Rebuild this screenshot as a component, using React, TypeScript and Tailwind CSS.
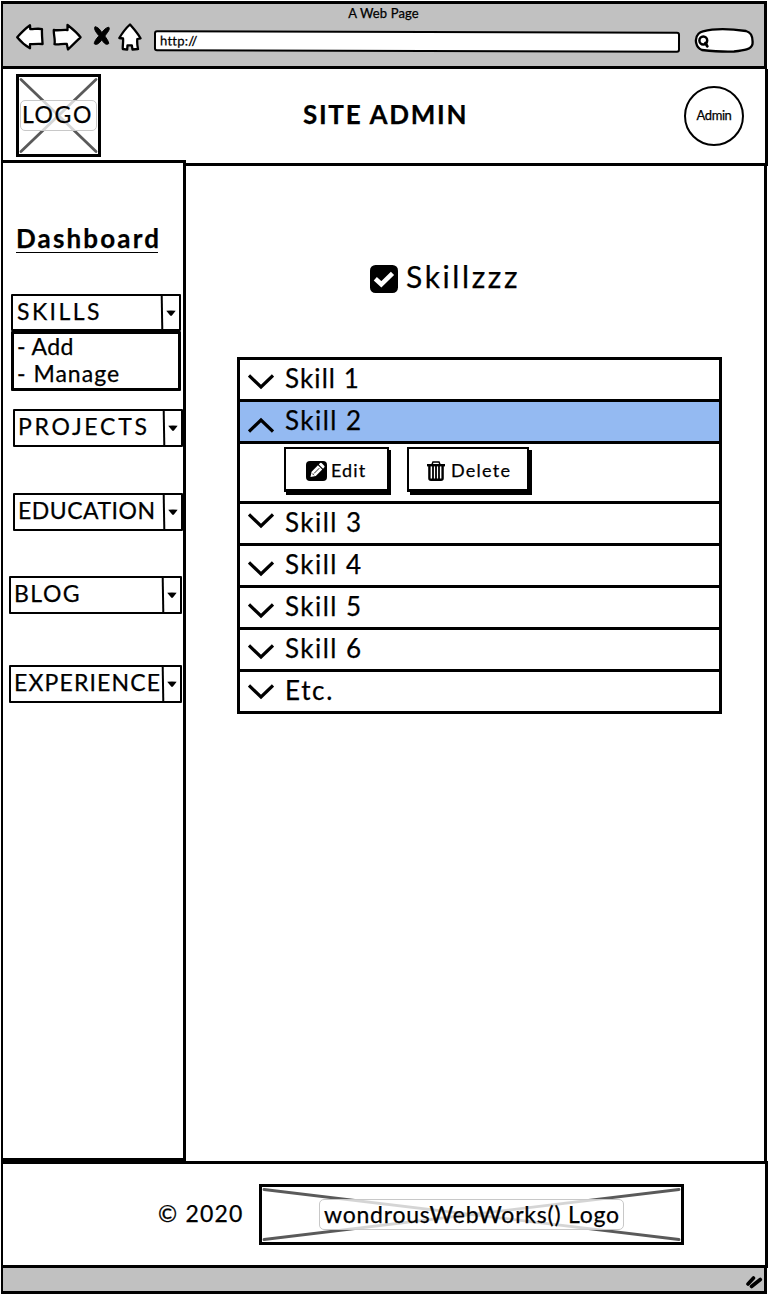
import React from 'react';

type IconProps = { className?: string };

const BackIcon = ({ className }: IconProps) => (
  <svg className={className} width="28" height="26" viewBox="0 0 28 26" fill="#fff" stroke="#000" strokeWidth="2.3" strokeLinejoin="round">
    <path d="M1.2 13.3 C5 9 9.500 4.500 14 1.300 L14.300 5.200 C18 5.400 22 4 26 5.200 C25.700 10 26.200 15 26.600 20 C22 19.500 18 20 14 20.200 L14 24.300 C9 21.500 5 18 1.200 13.300 Z" />
  </svg>
);

const ForwardIcon = ({ className }: IconProps) => (
  <svg className={className} width="30" height="29" viewBox="0 0 30 29" fill="#fff" stroke="#000" strokeWidth="2.3" strokeLinejoin="round">
    <path d="M1.800 7 C6 7.800 11 6.500 15.500 7 L15.500 2 C20 5.500 25 9.500 28.500 14.300 C24.500 18 20.500 22 16 26.500 L14.800 21 C10.500 20.300 6.500 22 2.500 21.200 C3.500 16.500 1.500 12 1.800 7 Z" />
  </svg>
);

const StopIcon = ({ className }: IconProps) => (
  <svg className={className} width="18" height="22" viewBox="0 0 18 22" fill="#000" stroke="#000" strokeWidth="1" strokeLinejoin="round">
    <path d="M2 1.700 C5 2 7.500 5 8.800 7.800 C10.500 5 13 2.600 15.800 2.200 C17.500 4.500 14 8 11.800 11 C13.500 13.500 15.500 16 15.800 18.500 C13.500 20.500 11 18.500 8.800 14.800 C7 17.500 4 20.500 1.500 19 C.5 17.500 3.500 13.500 6 10.800 C3.500 8 .5 4 2 1.700 Z" />
  </svg>
);

const HomeIcon = ({ className }: IconProps) => (
  <svg className={className} width="24" height="29" viewBox="0 0 24 29" fill="#fff" stroke="#000" strokeWidth="2.300" strokeLinejoin="round">
    <path d="M12 1.500 C15.500 5.500 20 10.500 22.500 15.300 L19.300 16 C19 19.500 19.300 23 20 26 L14.500 26.500 L13.800 22.300 L9.500 22.300 L9.200 26.700 L4.800 26 C4.500 22.500 5.500 19 5 15.500 L1.300 15 C4 10.500 7.500 5.500 12 1.500 Z" />
  </svg>
);

const SearchPill = ({ className }: IconProps) => (
  <svg className={className} width="62" height="27" viewBox="0 0 62 27" fill="none" stroke="#000" strokeWidth="2.300" strokeLinecap="round">
    <path fill="#fff" d="M9 4.300 C20 1.500 38 2 52 4 C58 5.500 59 11 58.500 17 C57.500 22.500 50 23.500 40 24.500 C28 25 17 24 8 23 C1.500 20.500 0 11.500 4.500 6.800 C5.800 5.500 7 4.800 9 4.300 Z" />
    <circle cx="9.300" cy="13.500" r="3.900" strokeWidth="2.500" />
    <path d="M11.500 16 L13.300 19.300" strokeWidth="2.800" />
  </svg>
);

const CheckSquare = () => (
  <svg width="28" height="28" viewBox="0 0 28 28">
    <rect width="28" height="28" rx="5.500" />
    <path d="M5.300 13.800 L11.300 19.300 L22.500 8.300" fill="none" stroke="#fff" strokeWidth="4.600" />
  </svg>
);

const PencilSquare = () => (
  <svg width="21" height="20" viewBox="0 0 21 20">
    <rect width="21" height="20" rx="4" />
    <g transform="rotate(45 10.500 10)">
      <path d="M7.500 2.200 Q7.500 .8 8.800 .8 H12.200 Q13.500 .8 13.500 2.200 V3.700 H7.500 Z M7.500 4.900 H13.500 V14 L10.500 18.500 L7.500 14 Z" fill="#fff" />
      <path d="M10.500 6 V13.500 M9.300 14.800 H11.700" stroke="#000" strokeWidth=".8" />
    </g>
  </svg>
);

const TrashIcon = () => (
  <svg width="18" height="20" viewBox="0 0 18 20" fill="none" stroke="#000">
    <path d="M5 3.500 L6 1 H12 L13 3.500" strokeWidth="1.500" />
    <path d="M0 4.200 H18" strokeWidth="2.400" />
    <path d="M2.400 5 V17.300 Q2.400 18.800 4 18.800 H14 Q15.600 18.800 15.600 17.300 V5" strokeWidth="2.400" />
    <path d="M6 5 V18 M9 5 V18 M12 5 V18" strokeWidth="1.800" />
  </svg>
);

const Chevron = ({ className }: IconProps) => (
  <svg className={className} width="26" height="16" viewBox="0 0 26 16" fill="none" stroke="#000" strokeWidth="3.200">
    <path d="M1 1.500 L13 13 L25 1.500" />
  </svg>
);

const Placeholder = ({ w, h }: { w: number; h: number }) => (
  <svg className="absolute inset-0" width={w} height={h} viewBox={`0 0 ${w} ${h}`} stroke="#5a5a5a" strokeWidth="2.800" strokeLinecap="round">
    <path d={`M2 2.500 L${w - 2} ${h - 2.5} M${w - 2} 2.500 L2 ${h - 2.5}`} />
  </svg>
);

const Select = ({ label, className, textClass }: { label: string; className: string; textClass: string }) => (
  <div className={`flex shrink-0 rounded-[1px] border-2 border-black bg-white ${className}`}>
    <div className={`min-w-0 flex-1 whitespace-nowrap text-[23px] leading-[31px] ${textClass}`}>{label}</div>
    <div className="flex w-[18px] skew-x-1 items-center justify-center border-l-2 border-black">
      <svg width="10" height="6" viewBox="0 0 10 6"><path d="M.3 .8 Q5 0 9.700 .8 L5.700 5.700 H4.300 Z" /></svg>
    </div>
  </div>
);

const skills = [
  { name: 'Skill 1', chevron: 'mt-[5px]', text: 'tracking-[1.1px]' },
  { name: 'Skill 2', chevron: 'rotate-180 mt-[6px]', text: 'tracking-[1.46px]', open: true },
  { name: 'Skill 3', chevron: '-mt-[5px]', text: 'tracking-[1.46px]' },
  { name: 'Skill 4', chevron: 'mt-[6px]', text: 'tracking-[1.46px]' },
  { name: 'Skill 5', chevron: 'mt-[6px]', text: 'tracking-[1.46px]' },
  { name: 'Skill 6', chevron: 'mt-[4px]', text: 'tracking-[1.46px]' },
  { name: 'Etc.', chevron: 'mt-0', text: 'tracking-[1.7px]' },
];

export default function App() {
  return (
    <div className="flex h-[1295px] w-[769px] flex-col overflow-hidden bg-white pl-px pt-px font-['Lato','Open_Sans',sans-serif] text-black [-webkit-text-stroke:0.25px_#000]">
      <header className="flex h-[68px] w-[766px] shrink-0 flex-col border-[3px] border-l-2 border-black bg-[#c1c1c1]">
        <div className="h-[18px] text-center text-[13px] leading-[18px] tracking-[0.11px]">A Web Page</div>
        <div className="flex h-[44px] items-start">
          <BackIcon className="ml-[13px] mt-[2px]" />
          <ForwardIcon className="ml-2 mt-px" />
          <StopIcon className="ml-[11px] mt-[3px]" />
          <HomeIcon className="ml-[7px] mt-px" />
          <div className="ml-3 mt-[9px] h-[21px] w-[526px] rotate-[0.14deg] rounded-[3px] border-2 border-black bg-white pl-[4px] text-[13px] leading-[16px] tracking-[0.24px]">http://</div>
          <SearchPill className="ml-[14px] mt-[5px]" />
        </div>
      </header>

      <section className="flex h-[97px] w-[767px] shrink-0 items-start border-b-[3px] border-l-2 border-r-[3px] border-black">
        <div className="relative ml-[13px] mt-[5px] flex h-[83px] w-[85px] items-center justify-center border-[3px] border-black">
          <Placeholder w={79} h={77} />
          <div className="relative h-[31px] w-[77px] shrink-0 rounded-[5px] border border-[#c8c8c8] bg-white/75 pl-[1px] text-[23px] leading-[26px] tracking-[1.58px]">LOGO</div>
        </div>
        <h1 className="ml-[202px] mt-[29px] w-[170px] whitespace-nowrap text-[26px] font-bold leading-[32px] tracking-[1.7px]">SITE ADMIN</h1>
        <div className="ml-[211px] mt-[17px] flex h-[60px] w-[60px] items-center justify-center rounded-full border-2 border-black text-[13px] tracking-[-0.44px]">Admin</div>
      </section>

      <main className="flex h-[995px] w-[766px] shrink-0 border-r-[3px] border-black">
        <aside className="relative -mt-[6px] h-[1001px] w-[185px] shrink-0 border-[3px] border-l-2 border-black bg-white">
          <h2 className="ml-[13px] mt-[61px] h-[29px] w-[142px] whitespace-nowrap border-b border-black text-[26px] font-bold leading-[28px] tracking-[2.15px]">Dashboard</h2>
          <Select label="SKILLS" className="ml-[8px] mt-[41px] h-[37px] w-[170px]" textClass="pl-[4px] tracking-[2.44px]" />
          <ul className="ml-[8px] h-[60px] w-[170px] rounded-[1px] border-[3px] border-black pl-[3px] text-[23px] leading-[27px]">
            <li className="-mt-px tracking-[0.4px]">- Add</li>
            <li className="tracking-[1px]">- Manage</li>
          </ul>
          <Select label="PROJECTS" className="ml-[10px] mt-[18px] h-[38px] w-[170px]" textClass="pl-[3px] tracking-[2.75px]" />
          <Select label="EDUCATION" className="ml-[10px] mt-[46px] h-[38px] w-[170px]" textClass="pl-[3px] tracking-[0.5px]" />
          <Select label="BLOG" className="ml-[6px] mt-[45px] h-[38px] w-[173px]" textClass="pl-[3px] tracking-[1.5px]" />
          <Select label="EXPERIENCE" className="ml-[6px] mt-[51px] h-[38px] w-[173px]" textClass="pl-[3px] tracking-[1.15px]" />
        </aside>

        <div className="flex-1">
          <div className="ml-[184px] mt-[94px] flex h-[34px] items-center">
            <div className="mt-[3px]"><CheckSquare /></div>
            <h2 className="-mt-[2px] ml-[8px] text-[30px] leading-[34px] tracking-[2.61px]">Skillzzz</h2>
          </div>
          <div className="ml-[51px] mt-[63px] w-[485px] border-x-[3px] border-t-[3px] border-black">
            {skills.map((s) => (
              <React.Fragment key={s.name}>
                <div className={`flex h-[42px] items-center border-b-[3px] border-black ${s.open ? 'bg-[#94baf2]' : ''}`}>
                  <Chevron className={`ml-[8px] ${s.chevron}`} />
                  <span className={`ml-[11px] pb-[2px] text-[26px] leading-[35px] ${s.text}`}>{s.name}</span>
                </div>
                {s.open && (
                  <div className="flex h-[60px] items-start border-b-[3px] border-black pt-[3px]">
                    <button className="ml-[44px] flex h-[45px] w-[105px] items-center border-2 border-b-[3px] border-black bg-white pl-[20px] pt-[3px] text-[18px] tracking-[1.1px] shadow-[2px_3px_0_#000]">
                      <PencilSquare />
                      <span className="-mt-px ml-[4px]">Edit</span>
                    </button>
                    <button className="ml-[18px] flex h-[45px] w-[122px] items-center border-2 border-b-[3px] border-black bg-white pl-[18px] pt-[3px] text-[18px] tracking-[1.25px] shadow-[3px_3px_0_#000]">
                      <TrashIcon />
                      <span className="-mt-px ml-[6px]">Delete</span>
                    </button>
                  </div>
                )}
              </React.Fragment>
            ))}
          </div>
        </div>
      </main>

      <footer className="flex h-[107px] w-[767px] shrink-0 items-center border-[3px] border-l-2 border-black">
        <span className="ml-[155px] w-[101px] pb-[4px] text-[23px] leading-[30px] tracking-[1.19px]">© 2020</span>
        <div className="relative flex h-[61px] w-[425px] items-center justify-center border-[3px] border-black">
          <Placeholder w={419} h={55} />
          <div className="relative h-[31px] w-[305px] whitespace-nowrap rounded-[5px] border border-[#c8c8c8] bg-white/75 pl-[4px] text-[23px] leading-[28px] tracking-[0.77px]">wondrousWebWorks() Logo</div>
        </div>
      </footer>
      <div className="flex h-[26px] w-[766px] shrink-0 items-center justify-end border-b-[3px] border-l-2 border-r-[3px] border-black bg-[#c1c1c1] pr-[1px]">
        <svg className="mt-[5px]" width="18" height="14" viewBox="0 0 18 14" stroke="#000" strokeWidth="3.600" strokeLinecap="round" fill="none">
          <path d="M3 9 L8.500 3 M6.500 11.500 L15.300 4.500" />
        </svg>
      </div>
    </div>
  );
}
